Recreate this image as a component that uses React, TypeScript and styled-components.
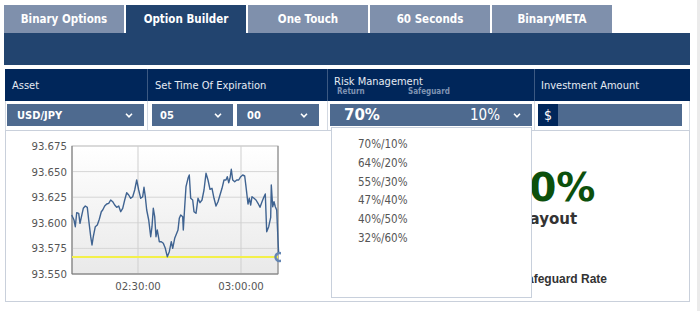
import React from "react";
import styled, { createGlobalStyle } from "styled-components";

const GlobalStyle = createGlobalStyle`
  html, body { margin: 0; padding: 0; background: #fff; }
  body { font-family: "DejaVu Sans Condensed", "DejaVu Sans", sans-serif; }
  * { box-sizing: border-box; }
`;

const Page = styled.div`
  display: flex;
  width: 700px;
  height: 311px;
  overflow: hidden;
`;

const Main = styled.div`
  flex: none;
  width: 690px;
  padding: 5px 0 0 4px;
`;

const Edge = styled.div`
  margin-left: auto;
  width: 3px;
  background: #ebebeb;
`;

const TabBar = styled.div`
  display: flex;
  gap: 2px;
  height: 28px;
`;

const Tab = styled.div<{ $active?: boolean }>`
  width: 120px;
  display: flex;
  align-items: center;
  justify-content: center;
  background: ${(p) => (p.$active ? "#22446f" : "#7f90ac")};
  color: #fff;
  font-weight: bold;
  font-size: 11.5px;
`;

const Band = styled.div`
  height: 32px;
  width: 686px;
  background: #22446f;
`;

const Table = styled.div`
  margin: 4px 0 0 1px;
  width: 685px;
  display: grid;
  grid-template-columns: 143px 180px 207px 155px;
  grid-template-rows: 32px 29px;
`;

const HeadCell = styled.div<{ $last?: boolean }>`
  background: #00265a;
  color: #e6ebf3;
  font-size: 11px;
  display: flex;
  flex-direction: column;
  justify-content: center;
  padding-left: ${(p) => (p.$last ? 6 : 7)}px;
  border-right: 1px solid ${(p) => (p.$last ? "#00265a" : "#3c5982")};
`;

const HeadTitle = styled.div`
  line-height: 13px;
`;

const SubLabels = styled.div`
  display: flex;
  padding-left: 3px;
  margin-top: -1px;
  font-size: 8px;
  font-weight: bold;
  color: #7f93b3;
  line-height: 10px;
`;

const SubLabel = styled.span<{ $w?: number }>`
  width: ${(p) => (p.$w ? `${p.$w}px` : "auto")};
`;

const InputCell = styled.div<{ $first?: boolean; $pad: number }>`
  position: relative;
  display: flex;
  gap: 4px;
  padding: 3px 0 0 ${(p) => p.$pad}px;
  background: #fff;
  border-right: 1px solid #d3d9e2;
  border-left: ${(p) => (p.$first ? "1px solid #d3d9e2" : "none")};
`;

const Select = styled.div<{ $w: number; $pad: number }>`
  width: ${(p) => p.$w}px;
  height: 22px;
  background: #4e6a8f;
  color: #fff;
  display: flex;
  align-items: center;
  padding: 0 11px 0 ${(p) => p.$pad}px;
  font-size: 11px;
  font-weight: bold;
`;

const SelectText = styled.span`
  flex: 1;
`;

const BigReturn = styled.span`
  flex: 1;
  font-family: "DejaVu Sans", sans-serif;
  font-size: 15px;
  font-weight: bold;
`;

const SmallSafeguard = styled.span`
  font-size: 15px;
  font-weight: normal;
  margin-right: 13px;
`;

const MoneyInput = styled.div`
  width: 144px;
  height: 22px;
  background: #4e6a8f;
  display: flex;
`;

const Dollar = styled.div`
  width: 20px;
  background: #00265a;
  color: #fff;
  font-size: 14px;
  display: flex;
  align-items: center;
  justify-content: center;
`;

const Dropdown = styled.div`
  position: absolute;
  z-index: 5;
  top: 26px;
  left: 3px;
  width: 201px;
  height: 171px;
  background: #fff;
  border: 1px solid #c8d0dc;
  padding: 7px 0 0 26px;
`;

const Option = styled.div`
  font-size: 11.5px;
  line-height: 18.8px;
  color: #555;
`;

const Content = styled.div`
  margin-left: 1px;
  width: 685px;
  height: 172px;
  border: 1px solid #c9d0db;
  display: flex;
`;

const ChartArea = styled.div`
  width: 402px;
  height: 170px;
`;

const InfoPanel = styled.div`
  flex: 1;
  display: flex;
  flex-direction: column;
  align-items: flex-start;
  padding-left: 94px;
  font-family: "DejaVu Sans", sans-serif;
`;

const BigRate = styled.div`
  margin-top: 37px;
  font-size: 39px;
  line-height: 39px;
  font-weight: bold;
  color: #0c500c;
`;

const PayoutLabel = styled.div`
  margin: 5px 0 0 17px;
  font-size: 15px;
  line-height: 15px;
  font-weight: bold;
  color: #333;
`;

const SafeguardLabel = styled.div`
  margin: 46px 0 0 17px;
  font-family: "Liberation Sans", Arial, sans-serif;
  font-size: 12px;
  line-height: 12px;
  font-weight: bold;
  color: #333;
`;

const Chevron = () => (
  <svg width="8" height="5" viewBox="0 0 8 5">
    <polyline points="1,0.8 4,3.8 7,0.8" fill="none" stroke="#fff" strokeWidth="1.6" />
  </svg>
);

const raw: [number, number][] = [
  [215, 255], [222, 270], [226, 290], [230, 248], [236, 250], [240, 280], [244, 262], [250, 235],
  [256, 228], [262, 232], [266, 270], [272, 320], [276, 345], [280, 320], [286, 290], [292, 285],
  [298, 268], [304, 245], [308, 240], [314, 228], [320, 222], [326, 220], [332, 210], [338, 215],
  [344, 225], [350, 232], [356, 228], [362, 245], [368, 235], [374, 210], [380, 188], [386, 195],
  [392, 205], [398, 200], [404, 180], [410, 150], [416, 180], [422, 205], [428, 200], [432, 172],
  [436, 200], [440, 240], [446, 270], [452, 320], [456, 290], [460, 235], [464, 260], [468, 320],
  [472, 300], [478, 335], [484, 335], [490, 340], [496, 355], [502, 380], [508, 365], [514, 335],
  [518, 355], [524, 325], [528, 315], [534, 300], [538, 265], [542, 255], [548, 260], [550, 300],
  [554, 230], [558, 170], [564, 145], [568, 135], [572, 205], [578, 210], [582, 245], [588, 250],
  [594, 205], [600, 218], [606, 210], [612, 180], [618, 130], [624, 150], [630, 178], [636, 175],
  [642, 205], [648, 228], [654, 215], [660, 195], [666, 175], [672, 150], [678, 150], [682, 140],
  [686, 158], [690, 145], [694, 118], [698, 150], [704, 155], [710, 150], [716, 150], [722, 140],
  [728, 135], [734, 138], [738, 170], [744, 222], [748, 205], [752, 225], [756, 200], [762, 205],
  [768, 210], [774, 220], [780, 232], [786, 215], [792, 200], [796, 192], [800, 305], [806, 290],
  [812, 262], [814, 165], [818, 230], [822, 215], [826, 230], [830, 240], [834, 330], [836, 372],
];

const linePoints = raw.map(([x, y]) => `${(x / 3).toFixed(1)},${(130 + y / 3).toFixed(1)}`).join(" ");

const yLabels = ["93.675", "93.650", "93.625", "93.600", "93.575", "93.550"];
const PX = 72, PY = 146, PW = 206, PH = 128;

const PriceChart = () => (
  <svg width="402" height="170" viewBox="6 131 402 170">
    <defs>
      <linearGradient id="plotBg" x1="0" y1="0" x2="0" y2="1">
        <stop offset="0" stopColor="#ffffff" />
        <stop offset="1" stopColor="#e9e9e9" />
      </linearGradient>
      <clipPath id="markClip">
        <rect x="268" y="248" width="13" height="18" />
      </clipPath>
    </defs>
    <rect x={PX} y={PY} width={PW} height={PH} fill="url(#plotBg)" stroke="#b5b5b5" strokeWidth="1" />
    {yLabels.map((l, i) => {
      const y = PY + (PH / 5) * i;
      return (
        <g key={l}>
          {i > 0 && i < 5 && <line x1={PX} x2={PX + PW} y1={y} y2={y} stroke="#d6d6d6" strokeWidth="1" />}
          <text x="67" y={y + 4} textAnchor="end" fontSize="11.3" fill="#555" fontFamily="DejaVu Sans Condensed, DejaVu Sans, sans-serif">
            {l}
          </text>
        </g>
      );
    })}
    {[138, 241].map((x) => (
      <line key={x} x1={x} x2={x} y1={PY} y2={PY + PH} stroke="#cfcfcf" strokeWidth="1" />
    ))}
    <line x1={PX} x2={PX} y1={PY} y2={PY + PH} stroke="#777" strokeWidth="1" />
    <line x1={PX} x2={PX + PW} y1={PY + PH} y2={PY + PH} stroke="#777" strokeWidth="1" />
    <line x1={PX + PW} x2={PX + PW} y1={PY} y2={PY + PH} stroke="#888" strokeWidth="1" />
    <line x1={PX} x2={PX + PW} y1="257" y2="257" stroke="#f3f04a" strokeWidth="2" />
    <polyline points={linePoints} fill="none" stroke="#3f6391" strokeWidth="1.4" strokeLinejoin="round" />
    <circle cx="279.5" cy="257" r="4" fill="none" stroke="#6486b3" strokeWidth="2.4" clipPath="url(#markClip)" />
    {[
      ["02:30:00", 138],
      ["03:00:00", 241],
    ].map(([t, x]) => (
      <text key={t} x={x} y="290" textAnchor="middle" fontSize="11.3" fill="#555" fontFamily="DejaVu Sans Condensed, DejaVu Sans, sans-serif">
        {t}
      </text>
    ))}
  </svg>
);

const tabs = ["Binary Options", "Option Builder", "One Touch", "60 Seconds", "BinaryMETA"];
const options = ["70%/10%", "64%/20%", "55%/30%", "47%/40%", "40%/50%", "32%/60%"];

export default function App() {
  return (
    <Page>
      <GlobalStyle />
      <Main>
        <TabBar>
          {tabs.map((t) => (
            <Tab key={t} $active={t === "Option Builder"}>
              {t}
            </Tab>
          ))}
        </TabBar>
        <Band />
        <Table>
          <HeadCell>
            <HeadTitle>Asset</HeadTitle>
          </HeadCell>
          <HeadCell>
            <HeadTitle>Set Time Of Expiration</HeadTitle>
          </HeadCell>
          <HeadCell style={{ paddingLeft: 6, paddingTop: 1 }}>
            <HeadTitle>Risk Management</HeadTitle>
            <SubLabels>
              <SubLabel $w={71}>Return</SubLabel>
              <SubLabel>Safeguard</SubLabel>
            </SubLabels>
          </HeadCell>
          <HeadCell $last>
            <HeadTitle>Investment Amount</HeadTitle>
          </HeadCell>

          <InputCell $first $pad={1}>
            <Select $w={137} $pad={10}>
              <SelectText>USD/JPY</SelectText>
              <Chevron />
            </Select>
          </InputCell>
          <InputCell $pad={4}>
            <Select $w={81} $pad={8}>
              <SelectText>05</SelectText>
              <Chevron />
            </Select>
            <Select $w={82} $pad={10}>
              <SelectText>00</SelectText>
              <Chevron />
            </Select>
          </InputCell>
          <InputCell $pad={2}>
            <Select $w={202} $pad={14}>
              <BigReturn>70%</BigReturn>
              <SmallSafeguard>10%</SmallSafeguard>
              <Chevron />
            </Select>
            <Dropdown>
              {options.map((o) => (
                <Option key={o}>{o}</Option>
              ))}
            </Dropdown>
          </InputCell>
          <InputCell $pad={3}>
            <MoneyInput>
              <Dollar>$</Dollar>
            </MoneyInput>
          </InputCell>
        </Table>
        <Content>
          <ChartArea>
            <PriceChart />
          </ChartArea>
          <InfoPanel>
            <BigRate>70%</BigRate>
            <PayoutLabel>Payout</PayoutLabel>
            <SafeguardLabel>Safeguard Rate</SafeguardLabel>
          </InfoPanel>
        </Content>
      </Main>
      <Edge />
    </Page>
  );
}
